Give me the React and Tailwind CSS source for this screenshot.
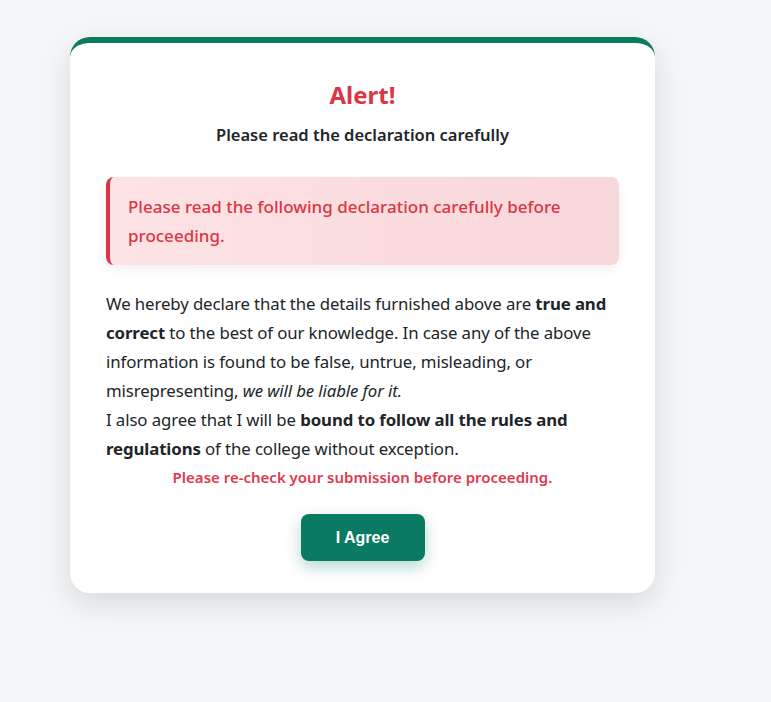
import React from 'react';

export default function App() {
  return (
    <div className="min-h-[702px] bg-[#f5f6f8] pt-[37px] pl-[70px]" style={{ fontFamily: '"Noto Sans", "Open Sans", sans-serif' }}>
      <div className="w-[585px] rounded-[20px] border-t-[6px] border-[#0b7c62] bg-white px-[36px] pt-[36px] pb-[32px] shadow-[0_10px_30px_rgba(0,0,0,0.12)]">
        {/* header */}
        <h2 className="text-center text-[24px] font-bold leading-[32px] text-[#dc3545]">Alert!</h2>
        <p className="mt-[12px] text-center text-[16.5px] font-semibold leading-[24px] text-[#212529]">
          Please read the declaration carefully
        </p>

        {/* warning box */}
        <div className="mt-[30px] rounded-[8px] border-l-[4px] border-[#dc3545] bg-gradient-to-r from-[#fde3e5] to-[#f8d7da] py-[15px] pl-[18px] pr-[20px] shadow-[0_4px_12px_rgba(0,0,0,0.06)]">
          <p className="text-[17px] font-medium leading-[29px] text-[#dc3545]">
            Please read the following declaration carefully before proceeding.
          </p>
        </div>

        {/* declaration */}
        <p className="mt-[24px] text-[16.8px] leading-[29px] tracking-[-0.1px] text-[#212529]">
          We hereby declare that the details furnished above are <strong className="font-bold">true and correct</strong> to the best of our knowledge. In case any of the above information is found to be false, untrue, misleading, or misrepresenting, <em>we will be liable for it.</em>
          <br />
          I also agree that I will be <strong className="font-bold">bound to follow all the rules and regulations</strong> of the college without exception.
        </p>
        <p className="mt-[2px] text-center text-[15px] font-semibold leading-[24px] text-[#e03a4e]">
          Please re-check your submission before proceeding.
        </p>

        <div className="mt-[25px] flex justify-center">
          <button
            className="h-[47px] w-[124px] rounded-[8px] bg-[#0b7a62] text-[16px] font-bold text-white shadow-[0_6px_16px_rgba(11,122,98,0.3)]"
            style={{ fontFamily: '"Liberation Sans", Arial, sans-serif' }}
          >
            I Agree
          </button>
        </div>
      </div>
    </div>
  );
}
